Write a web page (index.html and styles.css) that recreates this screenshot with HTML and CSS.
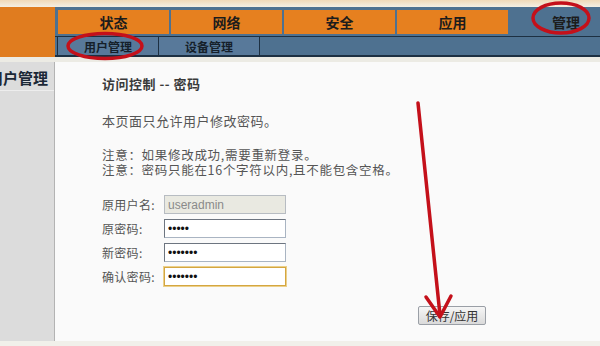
FILE: index.html
```html
<!DOCTYPE html>
<html lang="zh-CN">
<head>
  <meta charset="UTF-8" />
  <title>管理 - 用户管理</title>
  <link rel="stylesheet" href="styles.css">
</head>
<body>

<div class="topstrip"></div>

<div class="header">
  <div class="logo"></div>
  <div class="nav">
    <ul class="tabs">
      <li class="tab">状态</li>
      <li class="tab">网络</li>
      <li class="tab">安全</li>
      <li class="tab">应用</li>
      <li class="tab current">管理</li>
    </ul>
    <ul class="subtabs">
      <li class="sub">用户管理</li>
      <li class="sub">设备管理</li>
      <li class="sub rest"></li>
    </ul>
  </div>
</div>

<div class="strip"></div>

<div class="page">
  <div class="side">
    <div class="side-item"><span>用户管理</span></div>
  </div>

  <div class="main">
    <h3>访问控制 -- 密码</h3>
    <p class="intro">本页面只允许用户修改密码。</p>
    <p class="notes">注意：如果修改成功,需要重新登录。</p>
    <p class="notes">注意：密码只能在16个字符以内,且不能包含空格。</p>

    <div class="form">
      <div class="row">
        <label>原用户名:</label>
        <input type="text" value="useradmin" disabled />
      </div>
      <div class="row">
        <label>原密码:</label>
        <input type="password" value="12345" />
      </div>
      <div class="row">
        <label>新密码:</label>
        <input type="password" value="1234567" />
      </div>
      <div class="row">
        <label>确认密码:</label>
        <input type="password" value="1234567" class="focus" />
      </div>
    </div>

    <div class="actions">
      <button>保存/应用</button>
    </div>
  </div>
</div>

<!-- red marks drawn over the screenshot -->
<svg class="marks" width="600" height="346" viewBox="0 0 600 346">
  <ellipse cx="105" cy="46" rx="37" ry="12.5" />
  <ellipse cx="561" cy="18" rx="28" ry="15" />
  <line x1="418" y1="103" x2="440" y2="315" />
  <polyline points="426,297 440,317 451,296" />
</svg>

</body>
</html>
```

FILE: styles.css
```css
body {
  margin: 0;
  width: 600px;
  height: 346px;
  overflow: hidden;
  background: #f1f0ea;
  font-family: "Liberation Sans", "Noto Sans CJK SC", sans-serif;
  position: relative;
}
ul {
  list-style: none;
  margin: 0;
  padding: 0;
}
.topstrip {
  height: 7px;
  background: linear-gradient(#f0d9b8, #f4efe4);
}
.header {
  display: flex;
  height: 50px;
}
.logo {
  width: 55px;
  flex-shrink: 0;
  background: #e07c1f;
}
.nav {
  flex: 1;
  min-width: 0;
  background: #4e7190;
  display: flex;
  flex-direction: column;
}
.tabs {
  display: flex;
  gap: 2px;
  margin-top: 3px;
  padding-left: 3px;
  height: 24px;
}
.tab {
  width: 111px;
  flex-shrink: 0;
  background: #e6801f;
  font-size: 14px;
  font-weight: bold;
  color: #1c1c1c;
  display: flex;
  align-items: center;
  justify-content: center;
}
.tab.current {
  flex: 1;
  width: auto;
  background: none;
  padding-left: 22px;
}
.subtabs {
  display: flex;
  margin-top: 2px;
  height: 18px;
  border-top: 1px solid #1d3042;
  border-bottom: 2px solid #1d3042;
  padding-left: 2px;
}
.sub {
  width: 100px;
  flex-shrink: 0;
  background: #58799a;
  border-left: 1px solid #1d3042;
  font-size: 12px;
  font-weight: bold;
  color: #151f2a;
  display: flex;
  align-items: center;
  justify-content: center;
}
.sub.rest {
  flex: 1;
  flex-shrink: 1;
  background: #4e7190;
}
.strip {
  height: 5px;
  background: #ecebe4;
}
.page {
  display: flex;
  height: 279px;
}
.side {
  width: 54px;
  flex-shrink: 0;
  background: #dcdcdc;
  border-right: 1px solid #b3b3b3;
  overflow: hidden;
}
.side-item {
  display: flex;
  justify-content: flex-end;
  padding: 8px 6px 2px 0;
  border-bottom: 1px solid #ededed;
}
.side-item span {
  flex-shrink: 0;
  font-size: 15px;
  line-height: 18px;
  font-weight: bold;
  color: #1b2836;
}
.main {
  flex: 1;
  background: #fafafa;
  padding: 14px 0 0 47px;
  font-family: "Noto Sans CJK SC", sans-serif;
  color: #555;
}
.main h3 {
  margin: 0;
  font-size: 13px;
  line-height: 16px;
  letter-spacing: 0.5px;
  font-weight: 600;
  color: #3a3a3a;
}
.intro {
  margin: 21px 0 0;
  font-size: 13px;
  line-height: 16px;
  letter-spacing: 0.5px;
}
.notes {
  margin: 0;
  font-size: 12.5px;
  line-height: 15px;
  letter-spacing: 0.7px;
}
.intro + .notes {
  margin-top: 18px;
}
.form {
  margin-top: 18px;
  display: flex;
  flex-direction: column;
  gap: 5px;
}
.row {
  display: flex;
  align-items: center;
  height: 19px;
}
.row label {
  width: 62px;
  font-size: 12px;
  letter-spacing: 0.3px;
  color: #555;
}
.row input {
  box-sizing: border-box;
  width: 122px;
  height: 19px;
  margin: 0;
  padding: 0 3px;
  font-size: 12px;
  font-family: "Liberation Sans", sans-serif;
  color: #111;
  background: #fff;
  border: 1px solid #a9b4c2;
  border-top-color: #6d7580;
  border-left-color: #6d7580;
  outline: none;
}
.row input:disabled {
  background: #e9e9e1;
  color: #8a8a8a;
  border-color: #b7bcc2;
}
.row input.focus {
  border: 1px solid #d4a640;
  box-shadow: 0 0 0 1px #ecd08a;
}
.actions {
  display: flex;
  margin-top: 20px;
  padding-left: 316px;
}
.actions button {
  width: 68px;
  height: 19px;
  padding: 0;
  font-size: 12px;
  font-family: "Noto Sans CJK SC", sans-serif;
  color: #333;
  background: linear-gradient(#f6f6f6, #dadada);
  border: 1px solid #9a9fa6;
  border-radius: 2px;
}
.marks {
  position: absolute;
  top: 0;
  left: 0;
  fill: none;
  stroke: #c4101a;
  stroke-width: 3.5;
  stroke-linecap: round;
  stroke-linejoin: round;
}
```
